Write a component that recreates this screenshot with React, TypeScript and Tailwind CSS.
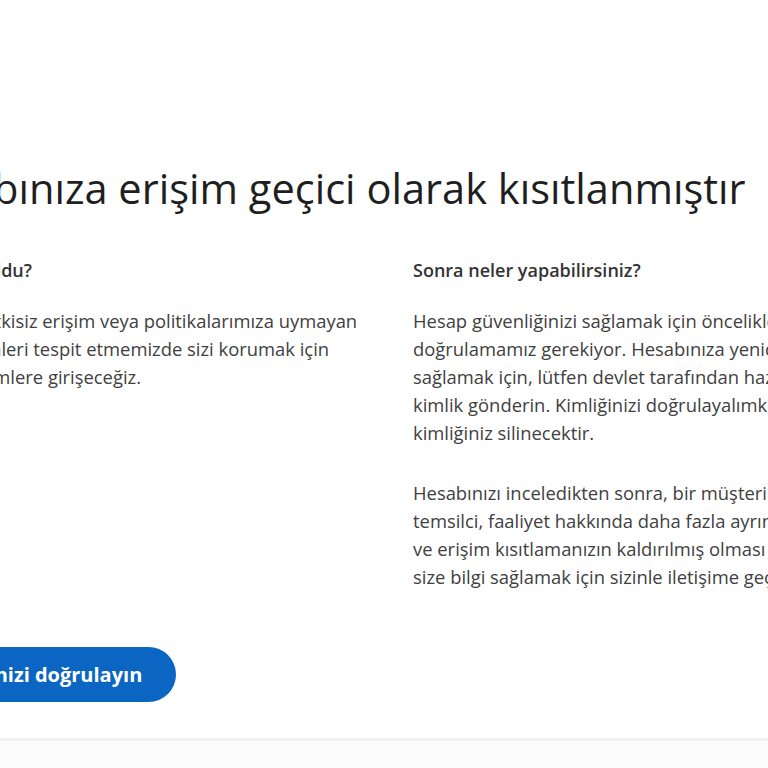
export default function App() {
  return (
    <div className="w-[768px] h-[768px] overflow-hidden bg-white flex flex-col" style={{ fontFamily: '"Open Sans", "Noto Sans", sans-serif' }}>
      <div className="flex-1 flex flex-col pt-[158px]">
        <h1 className="-ml-[104px] whitespace-nowrap text-[41.6px] leading-[60px] text-[#1f1f1f]">
          Hesabınıza erişim geçici olarak kısıtlanmıştır
        </h1>

        <div className="-ml-[44px] mt-[39px] flex w-[1000px]">
          <div className="w-[457px] shrink-0">
            <h2 className="text-[18px] leading-[26px] font-semibold text-[#333333]">Ne oldu?</h2>
            <p className="mt-[24px] text-[18.4px] leading-[28px] text-[#404040] whitespace-nowrap">
              O yetkisiz erişim veya politikalarımıza uymayan<br />
              işlemleri tespit etmemizde sizi korumak için<br />
              önlemlere girişeceğiz.
            </p>
          </div>
          <div className="w-[460px] shrink-0">
            <h2 className="text-[18px] leading-[26px] font-semibold text-[#333333]">Sonra neler yapabilirsiniz?</h2>
            <p className="mt-[24px] text-[18.4px] leading-[28px] text-[#404040] whitespace-nowrap">
              Hesap güvenliğinizi sağlamak için öncelikle kimliğinizi<br />
              doğrulamamız gerekiyor. Hesabınıza yeniden erişim<br />
              sağlamak için, lütfen devlet tarafından hazırlanmış bir<br />
              kimlik gönderin. Kimliğinizi doğrulayalımkdan sonra<br />
              kimliğiniz silinecektir.
            </p>
            <p className="mt-[32px] text-[18.4px] leading-[28px] text-[#404040] whitespace-nowrap">
              Hesabınızı inceledikten sonra, bir müşteri hizmetleri<br />
              temsilci, faaliyet hakkında daha fazla ayrıntı almak<br />
              ve erişim kısıtlamanızın kaldırılmış olması durumunda<br />
              size bilgi sağlamak için sizinle iletişime geçecektir.
            </p>
          </div>
        </div>

        <div className="-ml-[108px] mt-[56px]">
          <button className="h-[55px] px-[34px] rounded-full bg-[#0a66c2] text-white text-[20px] font-bold whitespace-nowrap">
            Kimliğinizi doğrulayın
          </button>
        </div>
      </div>

      <div className="h-[30px] border-t-[3px] border-[#f0f0f0] bg-[#fbfbfb]" />
    </div>
  );
}
